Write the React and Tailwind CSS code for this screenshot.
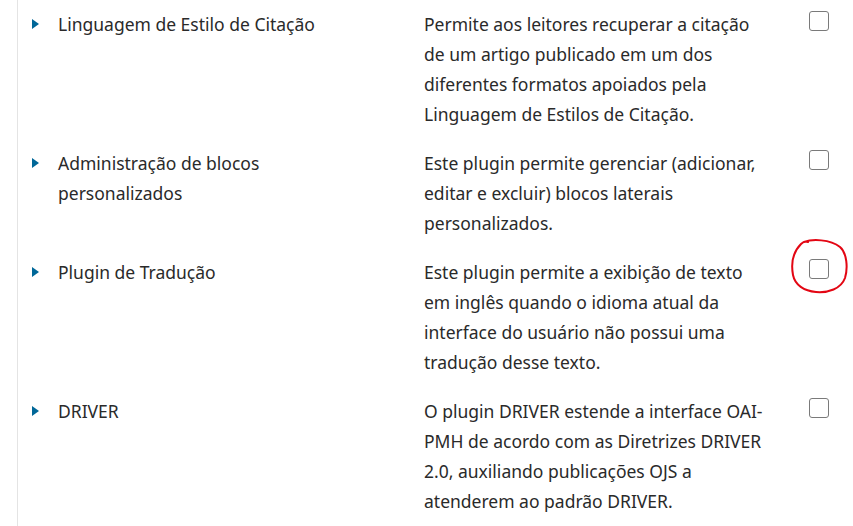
import React from 'react';

const plugins = [
  {
    name: 'Linguagem de Estilo de Citação',
    description: 'Permite aos leitores recuperar a citação de um artigo publicado em um dos diferentes formatos apoiados pela Linguagem de Estilos de Citação.',
  },
  {
    name: 'Administração de blocos personalizados',
    description: 'Este plugin permite gerenciar (adicionar, editar e excluir) blocos laterais personalizados.',
  },
  {
    name: 'Plugin de Tradução',
    description: 'Este plugin permite a exibição de texto em inglês quando o idioma atual da interface do usuário não possui uma tradução desse texto.',
    marked: true,
  },
  {
    name: 'DRIVER',
    description: 'O plugin DRIVER estende a interface OAI-PMH de acordo com as Diretrizes DRIVER 2.0, auxiliando publicações OJS a atenderem ao padrão DRIVER.',
  },
];

function PluginRow({ plugin }) {
  return (
    <div className="flex items-start pt-[9px] pb-[10px]">
      {/* expand arrow */}
      <div className="w-[40px] h-[30px] flex items-center pl-[14px]">
        <svg width="8" height="10" viewBox="0 0 8 10">
          <polygon points="0,0 7,5 0,10" fill="#006798" />
        </svg>
      </div>
      <div className="w-[366px] pr-[60px]">{plugin.name}</div>
      <div className="w-[344px]">{plugin.description}</div>
      <div className="relative pl-[41px] pt-[2px]">
        <div className="w-[20px] h-[20px] rounded-[3px] border-[1.5px] border-[#7a7a7a] bg-white" />
        {plugin.marked && (
          // hand-drawn annotation around the checkbox
          <svg
            className="absolute left-[22px] top-[-19px] pointer-events-none"
            width="60"
            height="58"
            viewBox="0 0 60 58"
            fill="none"
          >
            <path
              d="M14 4 C 22 1, 40 1, 50 9 C 57 15, 58 30, 55 40 C 51 51, 38 55, 26 54 C 14 53, 5 47, 3 37 C 1 26, 3 14, 11 6 C 13 4, 16 3, 18 4"
              stroke="#e30613"
              strokeWidth="2"
              strokeLinecap="round"
            />
          </svg>
        )}
      </div>
    </div>
  );
}

export default function App() {
  return (
    <div className="w-[853px] h-[526px] bg-white overflow-hidden font-['Noto_Sans',sans-serif] text-[17.5px] leading-[30px] text-[#2a2a2a]">
      <div className="ml-[17px] border-l border-[#e4e4e4] h-full">
        {plugins.map((p) => (
          <PluginRow key={p.name} plugin={p} />
        ))}
      </div>
    </div>
  );
}
